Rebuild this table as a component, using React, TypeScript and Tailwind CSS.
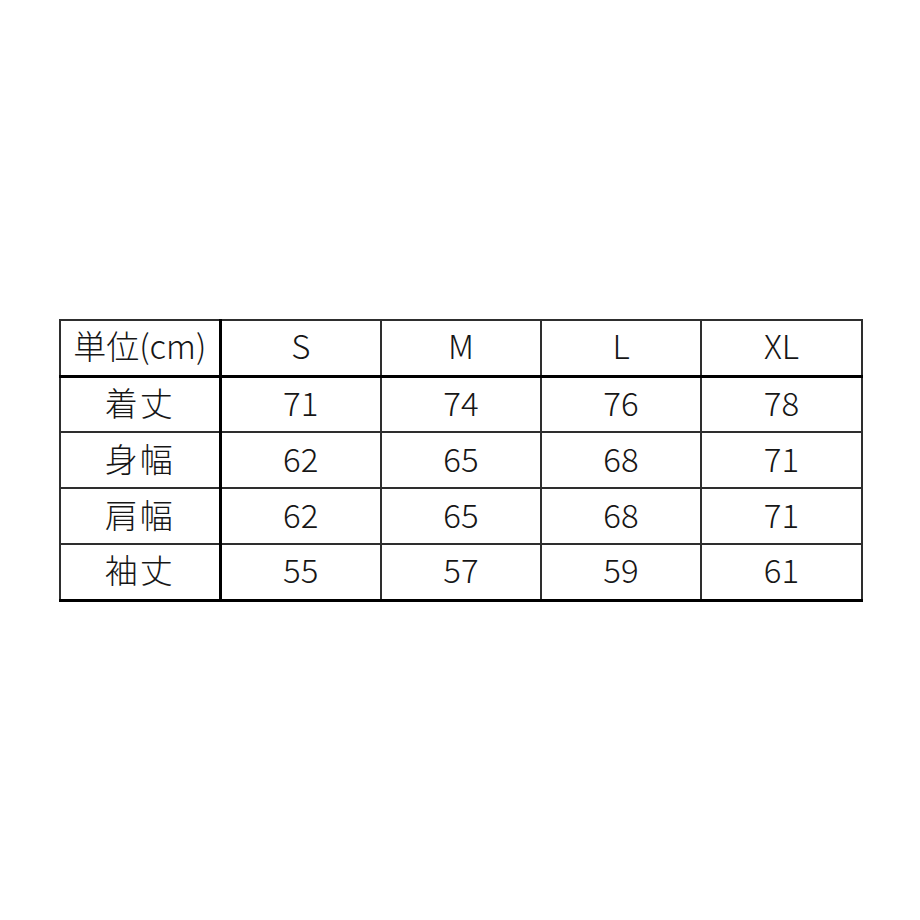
import React from "react";

const sizes = ["S", "M", "L", "XL"];

const rows = [
  { label: "着丈", values: ["71", "74", "76", "78"] },
  { label: "身幅", values: ["62", "65", "68", "71"] },
  { label: "肩幅", values: ["62", "65", "68", "71"] },
  { label: "袖丈", values: ["55", "57", "59", "61"] },
];

const cell = "border-2 border-[#2e2e2e] text-center align-middle p-0 pb-[4px]";

const App = () => {
  return (
    <div
      className="w-[920px] h-[920px] bg-white pt-[319px] pl-[59px] text-[#161616] font-light"
      style={{ fontFamily: '"Noto Sans CJK JP", "Noto Sans", sans-serif' }}
    >
      <table className="table-fixed border-collapse w-[802px] text-[33px] leading-none">
        <colgroup>
          <col className="w-[160px]" />
          <col className="w-[161px]" />
          <col className="w-[160px]" />
          <col className="w-[160px]" />
          <col className="w-[161px]" />
        </colgroup>
        <thead>
          <tr className="h-[56px]">
            <th className={`${cell} font-light border-r-[3px] border-r-black border-b-[3px] border-b-black`}>
              単位(cm)
            </th>
            {sizes.map((s) => (
              <th key={s} className={`${cell} font-light border-b-[3px] border-b-black`}>
                {s}
              </th>
            ))}
          </tr>
        </thead>
        <tbody>
          {rows.map((r, i) => (
            <tr key={r.label} className="h-[56px]">
              <td
                className={`${cell} border-r-[3px] border-r-black tracking-[2px] ${
                  i === rows.length - 1 ? "border-b-[3px] border-b-black" : ""
                }`}
              >
                {r.label}
              </td>
              {r.values.map((v, j) => (
                <td
                  key={j}
                  className={`${cell} ${i === rows.length - 1 ? "border-b-[3px] border-b-black" : ""}`}
                >
                  {v}
                </td>
              ))}
            </tr>
          ))}
        </tbody>
      </table>
    </div>
  );
};

export default App;
